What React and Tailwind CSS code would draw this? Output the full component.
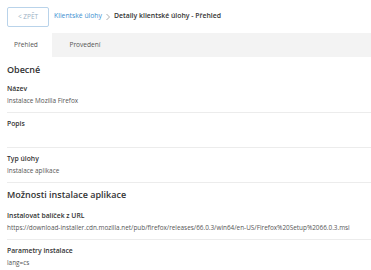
import React from 'react';

const font = { fontFamily: '"Open Sans", "Noto Sans", sans-serif' };

function Field({ label, value, last }) {
  return (
    <div className={`pt-[5px] pb-[5px] ${last ? '' : 'border-b border-[#ececec]'}`}>
      <div className="text-[6.8px] font-semibold text-[#333] leading-[12px] whitespace-nowrap">{label}</div>
      <div className="text-[6.4px] text-[#555] leading-[12px] h-[12px] whitespace-nowrap">{value}</div>
    </div>
  );
}

export default function App() {
  return (
    <div className="w-[371px] h-[270px] bg-white overflow-hidden" style={font}>
      <div className="h-[33px] flex items-center px-[7px]">
        <button className="h-[20px] w-[42px] border border-[#b9d3ea] rounded-[2px] text-[6.5px] text-[#9ab0c4]">
          &lt; ZPĚT
        </button>
        <span className="ml-[5px] text-[6.8px] text-[#3d8fd1] whitespace-nowrap">Klientské úlohy</span>
        <svg className="mx-[3px] shrink-0" width="6" height="8" viewBox="0 0 6 8">
          <path d="M1.5 1 L4.5 4 L1.5 7" fill="none" stroke="#999" strokeWidth="0.8" />
        </svg>
        <span className="text-[6.9px] font-semibold text-[#333] whitespace-nowrap">Detaily klientské úlohy - Přehled</span>
      </div>
      <div className="h-[24px] bg-[#f3f3f3] flex text-[6.6px] text-[#555]">
        <div className="w-[52px] bg-white flex items-center justify-center">Přehled</div>
        <div className="w-[66px] flex items-center justify-center">Provedení</div>
      </div>
      <div className="pl-[7px]">
        <div className="text-[9px] font-semibold text-[#333] leading-[14px] pt-[6px] pb-[1px]">Obecné</div>
        <Field label="Název" value="Instalace Mozilla Firefox" />
        <Field label="Popis" value="" />
        <Field label="Typ úlohy" value="Instalace aplikace" />
        <div className="text-[9px] font-semibold text-[#333] leading-[14px] pt-[5px] pb-[3px]">Možnosti instalace aplikace</div>
        <Field
          label="Instalovat balíček z URL"
          value="https://download-installer.cdn.mozilla.net/pub/firefox/releases/66.0.3/win64/en-US/Firefox%20Setup%2066.0.3.msi"
        />
        <Field label="Parametry instalace" value="lang=cs" last />
      </div>
    </div>
  );
}
